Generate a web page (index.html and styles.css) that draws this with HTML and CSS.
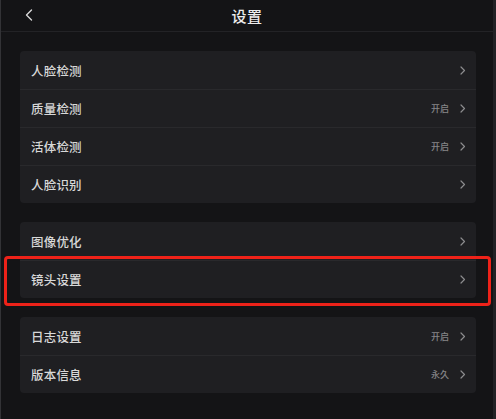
FILE: index.html
```html
<!DOCTYPE html>
<html lang="zh-CN">
<head>
<meta charset="utf-8">
<title>设置</title>
<link rel="stylesheet" href="styles.css">
</head>
<body>
<div class="app">
  <header class="header">
    <span class="back">
      <svg width="8" height="12" viewBox="0 0 8 12"><path d="M6.5 1 L1.5 6 L6.5 11" fill="none" stroke="#d8d8d8" stroke-width="1.4" stroke-linecap="round" stroke-linejoin="round"/></svg>
    </span>
    <h1 class="title">设置</h1>
  </header>
  <main class="content">
    <section class="group">
      <div class="row"><span class="label">人脸检测</span><span class="right"><svg class="chev" width="6" height="9" viewBox="0 0 6 9"><path d="M1 1 L4.5 4.5 L1 8" fill="none" stroke="#8c8c8e" stroke-width="1.2" stroke-linecap="round" stroke-linejoin="round"/></svg></span></div>
      <div class="row"><span class="label">质量检测</span><span class="right"><span class="value">开启</span><svg class="chev" width="6" height="9" viewBox="0 0 6 9"><path d="M1 1 L4.5 4.5 L1 8" fill="none" stroke="#8c8c8e" stroke-width="1.2" stroke-linecap="round" stroke-linejoin="round"/></svg></span></div>
      <div class="row"><span class="label">活体检测</span><span class="right"><span class="value">开启</span><svg class="chev" width="6" height="9" viewBox="0 0 6 9"><path d="M1 1 L4.5 4.5 L1 8" fill="none" stroke="#8c8c8e" stroke-width="1.2" stroke-linecap="round" stroke-linejoin="round"/></svg></span></div>
      <div class="row"><span class="label">人脸识别</span><span class="right"><svg class="chev" width="6" height="9" viewBox="0 0 6 9"><path d="M1 1 L4.5 4.5 L1 8" fill="none" stroke="#8c8c8e" stroke-width="1.2" stroke-linecap="round" stroke-linejoin="round"/></svg></span></div>
    </section>
    <section class="group">
      <div class="row"><span class="label">图像优化</span><span class="right"><svg class="chev" width="6" height="9" viewBox="0 0 6 9"><path d="M1 1 L4.5 4.5 L1 8" fill="none" stroke="#8c8c8e" stroke-width="1.2" stroke-linecap="round" stroke-linejoin="round"/></svg></span></div>
      <div class="row highlighted"><span class="label">镜头设置</span><span class="right"><svg class="chev" width="6" height="9" viewBox="0 0 6 9"><path d="M1 1 L4.5 4.5 L1 8" fill="none" stroke="#8c8c8e" stroke-width="1.2" stroke-linecap="round" stroke-linejoin="round"/></svg></span><span class="mark"></span></div>
    </section>
    <section class="group">
      <div class="row"><span class="label">日志设置</span><span class="right"><span class="value">开启</span><svg class="chev" width="6" height="9" viewBox="0 0 6 9"><path d="M1 1 L4.5 4.5 L1 8" fill="none" stroke="#8c8c8e" stroke-width="1.2" stroke-linecap="round" stroke-linejoin="round"/></svg></span></div>
      <div class="row"><span class="label">版本信息</span><span class="right"><span class="value">永久</span><svg class="chev" width="6" height="9" viewBox="0 0 6 9"><path d="M1 1 L4.5 4.5 L1 8" fill="none" stroke="#8c8c8e" stroke-width="1.2" stroke-linecap="round" stroke-linejoin="round"/></svg></span></div>
    </section>
  </main>
</div>
</body>
</html>
```

FILE: styles.css
```css
html, body {
  margin: 0;
  padding: 0;
  background: #141416;
}
body {
  font-family: "Noto Sans CJK SC", "Noto Sans", sans-serif;
  color: #dedede;
}
.app {
  width: 496px;
  height: 419px;
  box-sizing: border-box;
  border-left: 1px solid #333336;
  border-right: 3px solid #222225;
  background: #141416;
  overflow: hidden;
}
.header {
  position: relative;
  height: 31px;
  border-bottom: 1px solid #232326;
  display: flex;
  align-items: center;
  justify-content: center;
}
.back {
  position: absolute;
  left: 24px;
  top: 9px;
  display: flex;
}
.title {
  margin: 0;
  font-size: 15px;
  font-weight: 500;
  color: #ececec;
  letter-spacing: 0.5px;
  line-height: 1;
  margin-top: -1px;
}
.content {
  padding: 19px 17px 0 19px;
  display: flex;
  flex-direction: column;
  gap: 19px;
}
.group {
  background: #1f1f22;
  border-radius: 4px;
}
.row {
  position: relative;
  height: 38px;
  box-sizing: border-box;
  display: flex;
  align-items: center;
  justify-content: space-between;
  padding: 0 10px 0 11px;
}
.row + .row {
  border-top: 1px solid #29292c;
}
.label {
  font-size: 12.5px;
  font-weight: 500;
  color: #d8d8d8;
  letter-spacing: 0.2px;
}
.right {
  display: flex;
  align-items: center;
  gap: 11px;
}
.value {
  font-size: 9px;
  font-weight: 500;
  color: #858587;
}
.chev {
  display: block;
}
.mark {
  position: absolute;
  left: -16px;
  right: -15px;
  top: -5px;
  bottom: -8px;
  border: 3px solid #ee2219;
  border-radius: 4px;
  pointer-events: none;
}
```
